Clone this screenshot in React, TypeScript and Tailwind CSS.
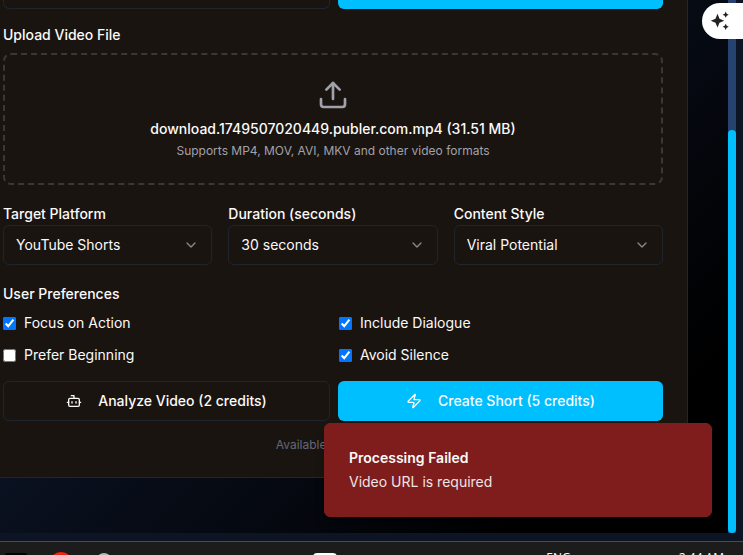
import { Bot, ChevronDown, Upload, Zap } from "lucide-react";

type SelectFieldProps = {
  id: string;
  label: string;
  options: string[];
};

function SelectField({ id, label, options }: SelectFieldProps) {
  return (
    <div className="flex min-w-0 flex-col gap-px">
      <label htmlFor={id} className="text-sm font-medium">
        {label}
      </label>
      <div className="grid items-center">
        <select
          id={id}
          className="col-start-1 row-start-1 h-10 w-full appearance-none rounded-md border border-[#1e252e] bg-[#1a1411] px-3 text-sm text-[#fafaf9] outline-none"
        >
          {options.map((option) => (
            <option key={option}>{option}</option>
          ))}
        </select>
        <ChevronDown className="pointer-events-none col-start-1 row-start-1 mr-[13px] size-4 justify-self-end opacity-50" />
      </div>
    </div>
  );
}

type PreferenceProps = {
  id: string;
  label: string;
  checked?: boolean;
};

function Preference({ id, label, checked = false }: PreferenceProps) {
  return (
    <div className="flex items-center gap-2">
      <input id={id} type="checkbox" defaultChecked={checked} className="size-[13px]" />
      <label htmlFor={id} className="text-sm">
        {label}
      </label>
    </div>
  );
}

function AssistantTab() {
  return (
    <button
      type="button"
      aria-label="Assistant"
      className="absolute top-[3px] right-0 flex h-9 w-[41px] items-center rounded-l-full bg-white pl-2"
    >
      <svg viewBox="0 0 20 20" className="size-5" fill="#222222" aria-hidden="true">
        <path d="M7.5 2.8 L9.5 7.7 L14.2 9.7 L9.5 11.7 L7.5 16.6 L5.5 11.7 L.8 9.7 L5.5 7.7Z" />
        <path d="M15.7 .6 L16.7 2.7 L18.8 3.7 L16.7 4.7 L15.7 6.8 L14.7 4.7 L12.6 3.7 L14.7 2.7Z" />
        <path d="M15.7 12.7 L16.7 14.8 L18.8 15.8 L16.7 16.8 L15.7 18.9 L14.7 16.8 L12.6 15.8 L14.7 14.8Z" />
      </svg>
    </button>
  );
}

function Toast() {
  return (
    <div
      role="alert"
      className="absolute right-4 bottom-4 w-[388px] rounded-md border border-[#7f1d1d] bg-[#7f1d1d] p-6 text-sm text-[#fafaf9] shadow-lg"
    >
      <p className="font-semibold">Processing Failed</p>
      <p className="mt-1 opacity-90">Video URL is required</p>
    </div>
  );
}

function Taskbar() {
  return (
    <footer className="flex h-3.5 shrink-0 items-start overflow-hidden border-t border-[#484b4f] bg-[#1c1c1c] pr-[19px] pl-1 text-white">
      <span className="mt-[11px] h-6 w-6 shrink-0 rounded-sm bg-black" />
      <span className="mt-[10px] ml-[21px] size-6 shrink-0 rounded-full bg-[#f52314]" />
      <span className="mt-[11px] ml-[23px] size-4 shrink-0 rounded-full bg-[#b5b5b5]" />
      <span className="mt-[11px] ml-[201px] h-6 w-6 shrink-0 rounded-sm bg-white" />
      <span className="mt-2 ml-auto font-['Open_Sans',sans-serif] text-xs leading-4">ENG</span>
      <span className="mt-2 ml-[108px] font-['Open_Sans',sans-serif] text-xs leading-4">2:44 AM</span>
    </footer>
  );
}

export default function App() {
  return (
    <div className="flex h-screen flex-col overflow-hidden bg-[#0d1525] font-[Inter,sans-serif] text-[#fafaf9]">
      <div className="relative mb-2 flex min-h-0 flex-1 pr-[7px]">
        <main className="relative min-w-0 flex-1 overflow-hidden bg-[linear-gradient(135deg,#121f3a,#000_85%)] pr-10">
          <section className="border-r border-b border-[#22262b] bg-[#1a1411] pr-6 pb-6 pl-[3px]">
            <div className="flex gap-2">
              <button
                type="button"
                aria-label="Video URL"
                className="h-[9px] flex-1 rounded-b-md border border-t-0 border-[#1e252e] px-4"
              />
              <button type="button" aria-label="Upload File" className="h-[9px] flex-1 rounded-b-md bg-[#00bfff] px-4" />
            </div>

            <div className="mt-4 flex flex-col gap-2">
              <h3 className="text-sm font-medium">Upload Video File</h3>
              <button
                type="button"
                className="flex flex-col items-center rounded-lg border-2 border-dashed border-[#3b3737] p-6"
              >
                <Upload className="mb-2 size-8 text-[#a1a1aa]" />
                <span className="text-sm font-medium">download.1749507020449.publer.com.mp4 (31.51 MB)</span>
                <span className="mt-1 text-xs text-[#a1a1aa]">
                  Supports MP4, MOV, AVI, MKV and other video formats
                </span>
              </button>
            </div>

            <div className="mt-[19px] grid grid-cols-3 gap-4">
              <SelectField id="platform" label="Target Platform" options={["YouTube Shorts"]} />
              <SelectField id="duration" label="Duration (seconds)" options={["30 seconds"]} />
              <SelectField id="style" label="Content Style" options={["Viral Potential"]} />
            </div>

            <fieldset className="mt-[19px]">
              <legend className="text-sm font-medium">User Preferences</legend>
              <div className="mt-[9px] grid grid-cols-2 gap-3">
                <Preference id="focus" label="Focus on Action" checked />
                <Preference id="dialogue" label="Include Dialogue" checked />
                <Preference id="beginning" label="Prefer Beginning" />
                <Preference id="silence" label="Avoid Silence" checked />
              </div>
            </fieldset>

            <div className="mt-4 flex gap-2">
              <button
                type="button"
                className="flex h-10 flex-1 items-center justify-center gap-4 rounded-md border border-[#1e252e] px-4 text-sm font-medium"
              >
                <Bot className="size-4" />
                Analyze Video (2 credits)
              </button>
              <button
                type="button"
                className="flex h-10 flex-1 items-center justify-center gap-4 rounded-md bg-[#00bfff] px-4 text-sm font-medium"
              >
                <Zap className="size-4" />
                Create Short (5 credits)
              </button>
            </div>

            <p className="mt-4 text-center text-xs text-[#64687a]">Available credits: 20</p>
          </section>
          <Toast />
        </main>

        <div className="flex w-2 shrink-0 flex-col bg-[#26426f] pt-[130px]">
          <div className="flex-1 rounded-full bg-[#00bfff]" />
        </div>
        <AssistantTab />
      </div>
      <Taskbar />
    </div>
  );
}
